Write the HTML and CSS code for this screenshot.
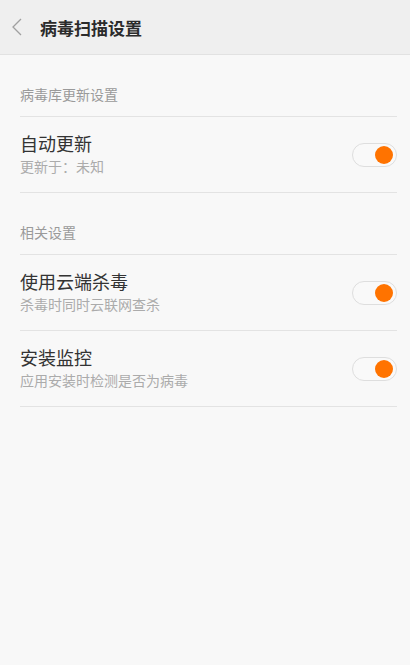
FILE: index.html
```html
<!DOCTYPE html>
<html lang="zh-CN">
  <head>
    <meta charset="utf-8" />
    <title>病毒扫描设置</title>
    <meta name="viewport" content="width=device-width, initial-scale=1" />
    <link rel="stylesheet" href="styles.css">
  </head>
  <body>
    <header class="topbar">
      <svg class="back" width="12" height="18" viewBox="0 0 12 18">
        <path d="M10 1 L2 9 L10 17" fill="none" stroke="#a0a0a0" stroke-width="1.3" />
      </svg>
      <h1>病毒扫描设置</h1>
    </header>
    <main>
      <p class="section">病毒库更新设置</p>
      <div class="row">
        <div class="text">
          <p class="title">自动更新</p>
          <p class="sub">更新于：未知</p>
        </div>
        <span class="toggle on"></span>
      </div>

      <p class="section">相关设置</p>
      <div class="row">
        <div class="text">
          <p class="title">使用云端杀毒</p>
          <p class="sub">杀毒时同时云联网查杀</p>
        </div>
        <span class="toggle on"></span>
      </div>
      <div class="row">
        <div class="text">
          <p class="title">安装监控</p>
          <p class="sub">应用安装时检测是否为病毒</p>
        </div>
        <span class="toggle on"></span>
      </div>
    </main>
  </body>
</html>
```

FILE: styles.css
```css
html,
body {
  height: 100%;
}
body {
  margin: 0;
  background: #f8f8f8;
  font-family: Roboto, "Noto Sans CJK SC", sans-serif;
  color: #333;
}
p {
  margin: 0;
}
.topbar {
  height: 55px;
  box-sizing: border-box;
  display: flex;
  align-items: center;
  background: #efefef;
  border-bottom: 1px solid #e2e2e2;
  padding-left: 11px;
}
.topbar h1 {
  margin: 0 0 0 17px;
  font-size: 17px;
  font-weight: 600;
  color: #2b2b2b;
}
main {
  padding: 0 13px 0 20px;
}
.section {
  padding: 30px 0 11px;
  font-size: 14px;
  line-height: 20px;
  color: #9a9a9a;
  border-bottom: 1px solid #e3e3e3;
}
.row {
  display: flex;
  align-items: center;
  height: 75px;
  border-bottom: 1px solid #e3e3e3;
}
.text {
  flex: 1;
  padding-top: 3px;
}
.title {
  font-size: 18px;
  line-height: 22px;
  color: #333;
}
.sub {
  font-size: 14px;
  line-height: 22px;
  color: #ababab;
}
.toggle {
  position: relative;
  width: 43px;
  height: 22px;
  border: 1px solid #dedede;
  border-radius: 12px;
  background: #f9f9f9;
  margin-top: 1px;
}
.toggle.on::after {
  content: "";
  position: absolute;
  right: 3px;
  top: 2px;
  width: 18px;
  height: 18px;
  border-radius: 50%;
  background: #ff7300;
}
```
